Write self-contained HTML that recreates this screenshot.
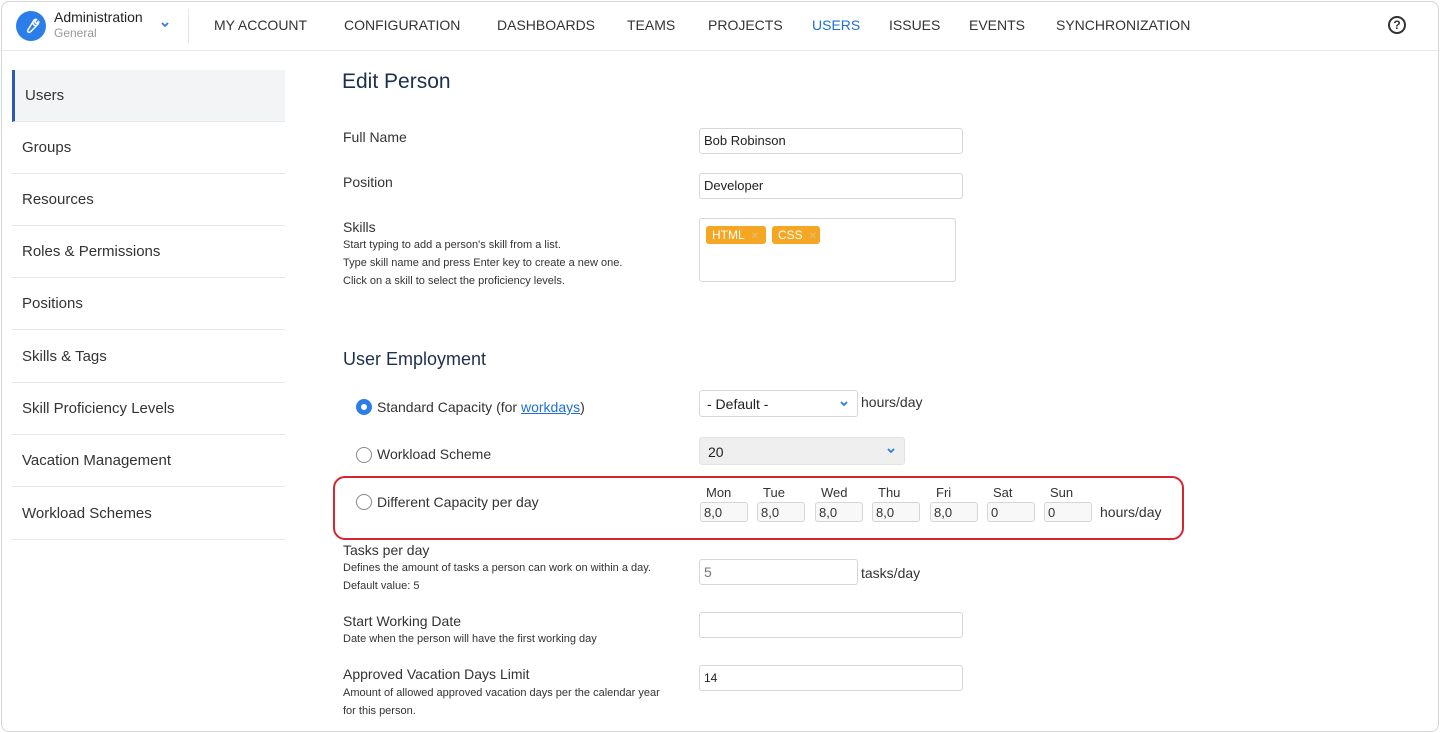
<!DOCTYPE html><html><head><meta charset="utf-8"><style>
*{box-sizing:border-box;margin:0;padding:0}
body{width:1440px;height:733px;background:#fff;font-family:"Liberation Sans",sans-serif;color:#333;position:relative;overflow:hidden}
.frame{position:absolute;left:1px;top:1px;width:1438px;height:731px;border:1px solid #d4d6dc;border-radius:8px}
.a{position:absolute;white-space:nowrap}
.nav{font-size:14px;color:#333;top:17px}
.si{position:absolute;left:12px;width:273px;height:52px;border-bottom:1px solid #e8e8ea;font-size:15px;color:#333;padding:0 0 0 10px;line-height:52px}
.lab{font-size:14px;color:#333;left:343px}
.sm{font-size:11px;color:#333;left:343px;line-height:18px}
.inp{position:absolute;border:1px solid #d6d6d6;border-radius:3px;background:#fff;font-size:13px;padding:0 4px;line-height:24px;color:#222}
.day{position:absolute;top:502px;width:48px;height:20px;border:1px solid #d6d6d6;border-radius:3px;background:#f8f8f8;font-size:13px;padding-left:3px;line-height:19px;color:#333}
.dl{position:absolute;top:485px;font-size:13px;color:#333}
.rad{position:absolute;width:16px;height:16px;border:1px solid #888;border-radius:50%;background:#fff}
.tag{position:absolute;top:226px;height:18px;background:#f5a623;border-radius:3px;color:#fff;font-size:12px;line-height:18px;padding-left:6px}
.tag span{color:#e0c080;font-size:10px;margin-left:6px}
</style></head><body>
<div class="frame"></div>
<!-- header -->
<div class="a" style="left:16px;top:11px;width:30px;height:30px;border-radius:50%;background:#2b7de9"></div>
<svg class="a" style="left:22px;top:17px" width="18" height="18" viewBox="0 0 24 24"><path d="M14.7 6.3a4 4 0 0 0 5 5l-8.6 8.6a2 2 0 0 1-3-3z M14.7 6.3a4 4 0 0 1 5-3l-2.5 2.5 .5 2 2 .5 2.5-2.5a4 4 0 0 1-3 5" fill="none" stroke="#fff" stroke-width="2" stroke-linejoin="round"/></svg>
<div class="a" style="left:54px;top:9px;font-size:14px;color:#222">Administration</div>
<div class="a" style="left:54px;top:26px;font-size:12px;color:#999">General</div>
<svg class="a" style="left:160px;top:21px" width="10" height="8" viewBox="0 0 10 8"><path d="M2 2l3 3 3-3" stroke="#2b7de9" stroke-width="1.8" fill="none"/></svg>
<div class="a" style="left:188px;top:9px;width:1px;height:34px;background:#e6e6e6"></div>
<div class="a nav" style="left:214px">MY ACCOUNT</div>
<div class="a nav" style="left:344px">CONFIGURATION</div>
<div class="a nav" style="left:497px">DASHBOARDS</div>
<div class="a nav" style="left:627px">TEAMS</div>
<div class="a nav" style="left:708px">PROJECTS</div>
<div class="a nav" style="left:812px;color:#1f6fd8">USERS</div>
<div class="a nav" style="left:889px">ISSUES</div>
<div class="a nav" style="left:969px">EVENTS</div>
<div class="a nav" style="left:1056px">SYNCHRONIZATION</div>
<div class="a" style="left:1388px;top:16px;width:18px;height:18px;border:2px solid #333;border-radius:50%;font-size:12px;font-weight:bold;text-align:center;line-height:14px;color:#333">?</div>
<div class="a" style="left:2px;top:50px;width:1436px;height:1px;background:#e8e8ea"></div>
<!-- sidebar -->
<div class="si" style="top:70px;background:#f3f4f6;border-left:3px solid #2c5ab0;padding-left:10px">Users</div>
<div class="si" style="top:122px">Groups</div>
<div class="si" style="top:174px">Resources</div>
<div class="si" style="top:226px">Roles &amp; Permissions</div>
<div class="si" style="top:278px">Positions</div>
<div class="si" style="top:331px">Skills &amp; Tags</div>
<div class="si" style="top:383px">Skill Proficiency Levels</div>
<div class="si" style="top:435px">Vacation Management</div>
<div class="si" style="top:488px">Workload Schemes</div>
<!-- content -->
<div class="a" style="left:342px;top:70px;font-size:21px;color:#1e2f4d">Edit Person</div>
<div class="a lab" style="top:129px">Full Name</div>
<div class="inp" style="left:699px;top:128px;width:264px;height:26px">Bob Robinson</div>
<div class="a lab" style="top:174px">Position</div>
<div class="inp" style="left:699px;top:173px;width:264px;height:26px">Developer</div>
<div class="a lab" style="top:219px">Skills</div>
<div class="a sm" style="top:236px">Start typing to add a person's skill from a list.<br>Type skill name and press Enter key to create a new one.<br>Click on a skill to select the proficiency levels.</div>
<div class="inp" style="left:699px;top:218px;width:257px;height:64px"></div>
<div class="tag" style="left:706px;width:60px">HTML<span>✕</span></div>
<div class="tag" style="left:772px;width:48px">CSS<span>✕</span></div>
<div class="a" style="left:343px;top:349px;font-size:18px;color:#1e2f4d">User Employment</div>
<div class="rad" style="left:356px;top:399px;border:5px solid #2b7de9"></div>
<div class="a lab" style="left:377px;top:399px">Standard Capacity (for <span style="color:#1f6fd8;text-decoration:underline">workdays</span>)</div>
<div class="inp" style="left:699px;top:390px;width:159px;height:27px;line-height:26px;font-size:14px;padding-left:7px">- Default -</div>
<svg class="a" style="left:839px;top:400px" width="10" height="8" viewBox="0 0 10 8"><path d="M2 2l3 3 3-3" stroke="#2b7de9" stroke-width="1.8" fill="none"/></svg>
<div class="a" style="left:861px;top:394px;font-size:14px">hours/day</div>
<div class="rad" style="left:356px;top:447px"></div>
<div class="a lab" style="left:377px;top:446px">Workload Scheme</div>
<div class="inp" style="left:699px;top:437px;width:206px;height:28px;background:#efefef;border-color:#e2e2e2;font-size:14px;line-height:28px;padding-left:8px">20</div>
<svg class="a" style="left:886px;top:447px" width="10" height="8" viewBox="0 0 10 8"><path d="M2 2l3 3 3-3" stroke="#2b7de9" stroke-width="1.8" fill="none"/></svg>
<div class="a" style="left:333px;top:476px;width:851px;height:64px;border:2.5px solid #d9232e;border-radius:12px"></div>
<div class="rad" style="left:356px;top:494px"></div>
<div class="a lab" style="left:377px;top:494px">Different Capacity per day</div>
<div class="dl" style="left:706px">Mon</div><div class="dl" style="left:763px">Tue</div><div class="dl" style="left:821px">Wed</div><div class="dl" style="left:878px">Thu</div><div class="dl" style="left:936px">Fri</div><div class="dl" style="left:993px">Sat</div><div class="dl" style="left:1050px">Sun</div>
<div class="day" style="left:700px">8,0</div><div class="day" style="left:757px">8,0</div><div class="day" style="left:815px">8,0</div><div class="day" style="left:872px">8,0</div><div class="day" style="left:930px">8,0</div><div class="day" style="left:987px">0</div><div class="day" style="left:1044px">0</div>
<div class="a" style="left:1100px;top:504px;font-size:14px">hours/day</div>
<div class="a lab" style="top:542px">Tasks per day</div>
<div class="a sm" style="top:559px">Defines the amount of tasks a person can work on within a day.<br>Default value: 5</div>
<div class="inp" style="left:699px;top:559px;width:159px;height:26px;color:#777;font-size:14px">5</div>
<div class="a" style="left:861px;top:565px;font-size:14px">tasks/day</div>
<div class="a lab" style="top:613px">Start Working Date</div>
<div class="a sm" style="top:630px">Date when the person will have the first working day</div>
<div class="inp" style="left:699px;top:612px;width:264px;height:26px"></div>
<div class="a lab" style="top:666px">Approved Vacation Days Limit</div>
<div class="a sm" style="top:684px">Amount of allowed approved vacation days per the calendar year<br>for this person.</div>
<div class="inp" style="left:699px;top:665px;width:264px;height:26px;font-size:12px">14</div>
</body></html>
